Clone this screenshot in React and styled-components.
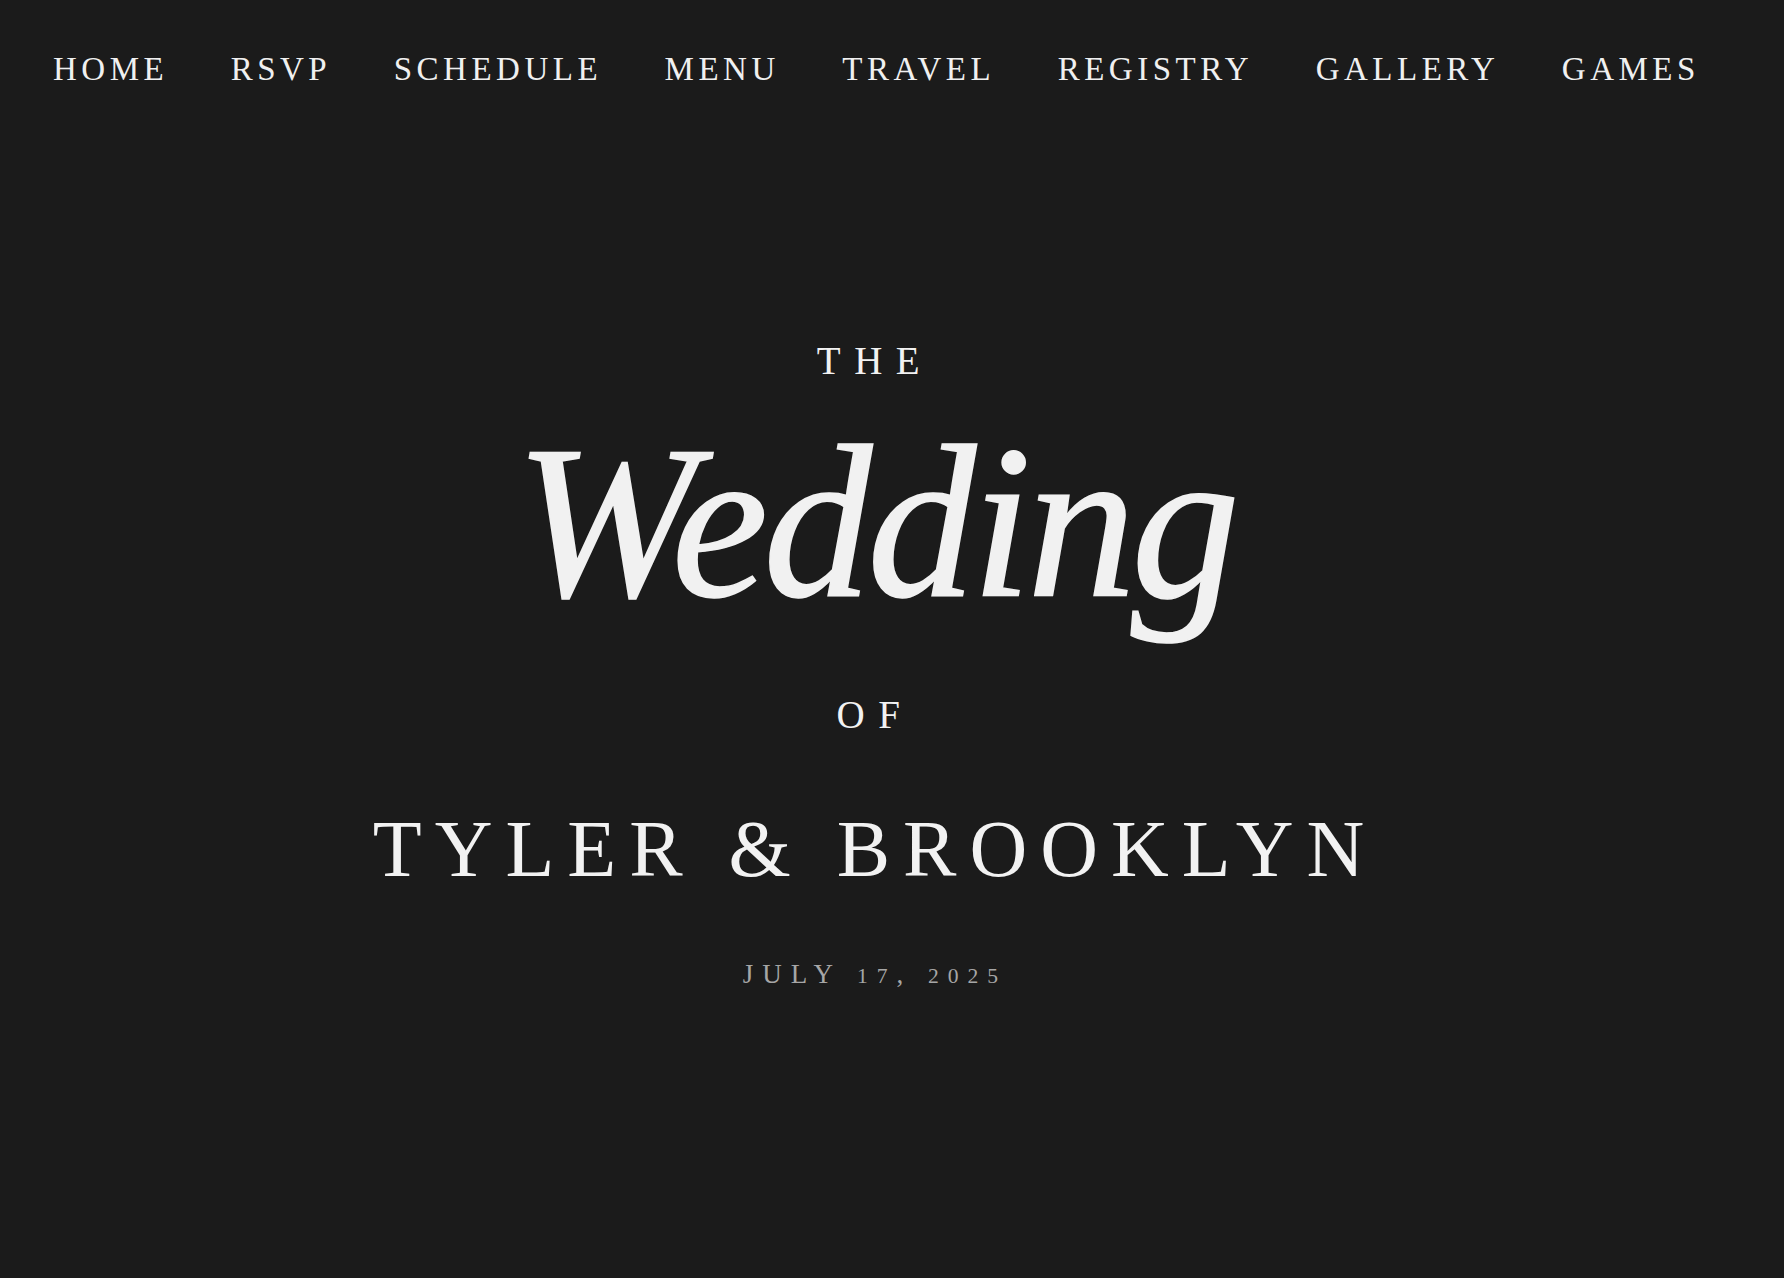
import React from "react";
import styled, { createGlobalStyle } from "styled-components";

const GlobalStyle = createGlobalStyle`
  html, body {
    margin: 0;
    padding: 0;
    background-color: #1b1b1b;
  }
  body {
    min-height: 100vh;
    font-family: "Liberation Serif", "Times New Roman", serif;
    color: #f2f2f2;
  }
`;

const Page = styled.div`
  min-height: 100vh;
  display: flex;
  flex-direction: column;
`;

const Nav = styled.nav`
  display: flex;
  align-items: center;
  gap: 62.5px;
  padding: 53px 53px 0;
`;

const NavLink = styled.a`
  font-size: 33px;
  line-height: 1;
  letter-spacing: 4.5px;
  text-transform: uppercase;
  color: #f0f0f0;
  text-decoration: none;
  white-space: nowrap;
  cursor: pointer;
`;

const Hero = styled.header`
  display: flex;
  flex-direction: column;
  align-items: center;
  text-align: center;
  padding: 0 34px 0 0;
`;

const Small = styled.div`
  font-size: 39px;
  line-height: 1;
  letter-spacing: 13.5px;
  margin-top: ${(p) => p.$top}px;
`;

const Title = styled.h1`
  margin: 34px 0 0;
  font-size: 218px;
  line-height: 1;
  font-style: italic;
  font-weight: 400;
  letter-spacing: -5px;
  color: #f1f1f1;
  -webkit-text-stroke: 1.5px #f1f1f1;
`;

const Names = styled.h2`
  margin: 75px 0 0;
  font-size: 80px;
  line-height: 1;
  font-weight: 400;
  letter-spacing: 13px;
  white-space: nowrap;
`;

const DateLine = styled.p`
  margin: 72px 0 0;
  font-size: 27px;
  line-height: 1;
  letter-spacing: 9px;
  color: #a6a6a6;
`;

const Num = styled.span`
  font-size: 0.8em;
`;

const links = ["Home", "RSVP", "Schedule", "Menu", "Travel", "Registry", "Gallery", "Games"];

export default function App() {
  return (
    <>
      <GlobalStyle />
      <Page>
        <Nav>
          {links.map((l) => (
            <NavLink key={l}>{l}</NavLink>
          ))}
        </Nav>
        <Hero>
          <Small $top={255}>THE</Small>
          <Title>Wedding</Title>
          <Small $top={63}>OF</Small>
          <Names>TYLER &amp; BROOKLYN</Names>
          <DateLine>
            JULY <Num>17</Num>, <Num>2025</Num>
          </DateLine>
        </Hero>
      </Page>
    </>
  );
}
